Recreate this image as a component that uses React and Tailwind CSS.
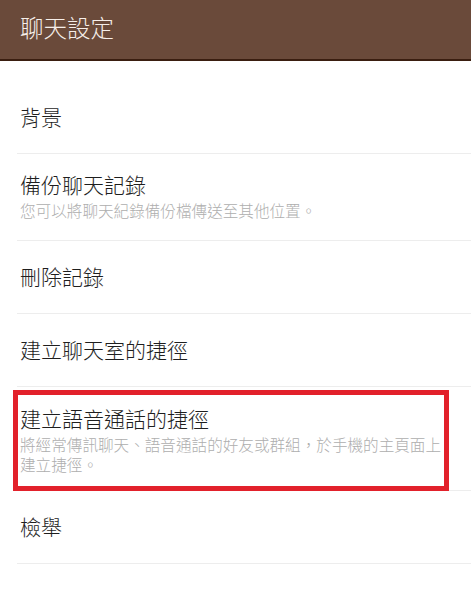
import React from "react";

const items = [
  { title: "背景" },
  { title: "備份聊天記錄", sub: "您可以將聊天紀錄備份檔傳送至其他位置。" },
  { title: "刪除記錄" },
  { title: "建立聊天室的捷徑" },
  {
    title: "建立語音通話的捷徑",
    sub: "將經常傳訊聊天、語音通話的好友或群組，於手機的主頁面上建立捷徑。",
    marked: true,
  },
  { title: "檢舉" },
];

function SettingRow({ item }) {
  if (!item.sub) {
    return (
      <div className="ml-[17px] h-[73px] flex items-center pl-[3px] border-b border-[#ededed]">
        <span className="mb-[3px] text-[21px] leading-[26px] font-light text-[#1e1e1e]">{item.title}</span>
      </div>
    );
  }
  return (
    <div
      className={
        "relative ml-[17px] pl-[3px] border-b border-[#ededed] " +
        (item.marked ? "h-[104px] pt-[18px]" : "h-[87px] pt-[17px]")
      }
    >
      <div className="text-[21px] leading-[26px] font-light text-[#1e1e1e]">{item.title}</div>
      <div className="mt-[3px] w-[428px] text-[15.6px] leading-[20px] font-light text-[#aeaeae]">
        {item.sub}
      </div>
      {/* red highlight box */}
      {item.marked && (
        <div className="absolute top-[3px] left-[-4px] w-[436px] h-[101px] border-[5px] border-[#e2212b]" />
      )}
    </div>
  );
}

export default function App() {
  return (
    <div
      className="w-[471px] h-[600px] bg-white overflow-hidden"
      style={{ fontFamily: '"Noto Sans CJK TC", "Noto Sans CJK SC", sans-serif' }}
    >
      {/* Header */}
      <div className="h-[61px] bg-[#6a4a3a] border-b-2 border-[#3a1e10] flex items-center pl-[20px]">
        <h1 className="text-[23.5px] text-[#f6eee9] font-light leading-none mb-[3px]">聊天設定</h1>
      </div>

      {/* Settings list */}
      <div className="pt-[20px]">
        {items.map((item) => (
          <SettingRow key={item.title} item={item} />
        ))}
      </div>
    </div>
  );
}
